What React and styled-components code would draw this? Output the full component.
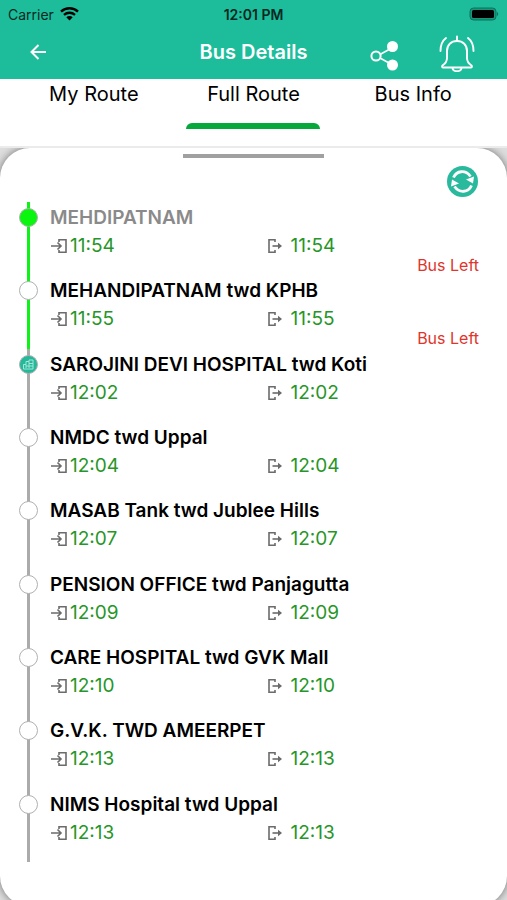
import React, { useState } from "react";
import styled, { createGlobalStyle } from "styled-components";

const GlobalStyle = createGlobalStyle`
  * {
    box-sizing: border-box;
  }

  body {
    margin: 0;
    background: #dedede;
    font-family: Inter, "Liberation Sans", sans-serif;
    color: #000;
  }

  button {
    padding: 0;
    border: none;
    background: none;
    font: inherit;
    color: inherit;
    cursor: pointer;
  }
`;

const Page = styled.div`
  display: flex;
  flex-direction: column;
  min-height: 100vh;
  overflow: hidden;
`;

//=========================== Header ====================================
const Header = styled.header`
  background: #1dbd9c;
`;

const StatusBar = styled.div`
  display: grid;
  grid-template-columns: 1fr auto 1fr;
  align-items: center;
  height: 28px;
  padding: 0 8px;
  font-size: 14px;
  color: #06281f;
`;

const Carrier = styled.div`
  display: flex;
  align-items: center;
  gap: 6px;
`;

const Clock = styled.div`
  font-weight: 600;
`;

const Battery = styled.svg`
  justify-self: end;
`;

const NavBar = styled.div`
  display: grid;
  grid-template-columns: 1fr auto 1fr;
  align-items: center;
  height: 51px;
  padding: 0 30px 2px;
  color: #fff;
`;

const Title = styled.h1`
  margin: 0;
  font-size: 20px;
  font-weight: 600;
  line-height: 46px;
  padding-bottom: 2px;
`;

const NavActions = styled.div`
  display: flex;
  justify-content: flex-end;
  gap: 40px;
  padding-right: 2px;
`;

const IconButton = styled.button`
  display: flex;
  align-items: center;
  justify-self: start;
`;

//=========================== Tabs ====================================
const Tabs = styled.nav`
  position: relative;
  z-index: 1;
  display: grid;
  grid-template-columns: repeat(3, 1fr);
  height: 69px;
  padding: 0 14px;
  background: #fff;
  border-bottom: 2px solid #ebebeb;
`;

const Tab = styled.button`
  display: flex;
  flex-direction: column;
  align-items: center;
  font-size: 20px;
  line-height: 30px;

  &::after {
    content: "";
    width: 134px;
    height: 6px;
    margin-top: 14px;
    border-radius: 6px 6px 0 0;
    background: ${(props) => (props.$active ? "#06a83c" : "transparent")};
  }
`;

//=========================== Sheet ====================================
const Sheet = styled.main`
  flex: 1;
  display: flex;
  flex-direction: column;
  margin-bottom: -6px;
  padding: 6px 0 44px;
  border-radius: 30px;
  background: #fff;
  box-shadow: 0 0 8px rgba(0, 0, 0, 0.5);
`;

const Handle = styled.div`
  align-self: center;
  width: 141px;
  height: 4px;
  background: #a0a0a0;
`;

const RefreshButton = styled(IconButton)`
  align-self: flex-end;
  margin: 8px 29px 5px 0;
`;

const StopList = styled.ol`
  flex: 1;
  display: grid;
  grid-auto-rows: 1fr;
  margin: 0;
  padding: 0 28px 0 18px;
  list-style: none;
`;

const Stop = styled.li`
  display: flex;
  gap: 12px;
`;

const Rail = styled.div`
  display: grid;
  width: 20px;
  justify-items: center;

  > * {
    grid-area: 1 / 1;
  }
`;

const Line = styled.span`
  width: 3px;
  background: ${(props) => (props.$passed ? "#0df31a" : "#ababab")};
`;

const markerColors = {
  start: "#0bf60f",
  bus: "#25b99b",
  stop: "#fff",
};

const Marker = styled.span`
  display: flex;
  align-items: center;
  justify-content: center;
  width: 19px;
  height: 19px;
  margin-top: 6px;
  border: 1px solid #b0b0b0;
  border-radius: 50%;
  background: ${(props) => markerColors[props.$kind]};
`;

const StopBody = styled.div`
  flex: 1;
`;

const StopName = styled.h2`
  margin: 0;
  padding-top: 1px;
  font-size: 19px;
  font-weight: 600;
  line-height: 30px;
  white-space: nowrap;
  color: ${(props) => (props.$muted ? "#8a8a8a" : "#000")};
`;

const Times = styled.div`
  display: grid;
  grid-template-columns: 1fr 1fr;
  column-gap: 4px;
`;

const Time = styled.div`
  display: flex;
  align-items: center;
  gap: ${(props) => props.$gap};
  font-size: 19px;
  line-height: 26px;
  color: #279628;
`;

const Status = styled.div`
  font-size: 16px;
  line-height: 12px;
  text-align: right;
  color: #e0352b;
`;

//=========================== Icons ====================================
const WifiIcon = () => (
  <svg width="19" height="14" viewBox="0 0 19 14" fill="none" stroke="#000">
    <path d="M1 4.6C5.8.2 13.2.2 18 4.600" strokeWidth="2.400" />
    <path d="M4 7.900c3.200-2.900 7.800-2.900 11 0" strokeWidth="2.300" />
    <path d="M6.300 10.300c1.900-1.700 4.500-1.700 6.400 0L9.500 13.600z" fill="#000" stroke="none" />
  </svg>
);

const BatteryIcon = () => (
  <Battery width="30" height="14" viewBox="0 0 30 14">
    <rect x="1" y="1" width="26" height="12" rx="3.500" fill="#16967b" stroke="#0f705c" />
    <rect x="3" y="3" width="22" height="8" rx="1.500" fill="#000" />
    <path d="M28 5c1.600.5 1.600 3.500 0 4z" fill="#0f705c" />
  </Battery>
);

const BackIcon = () => (
  <svg width="18" height="22" viewBox="0 0 18 22" fill="none" stroke="#fff" strokeWidth="2">
    <path d="M16 10H1.500M8.500 3l-7 7 7 7" />
  </svg>
);

const ShareIcon = () => (
  <svg width="29" height="38" viewBox="0 0 29 38" fill="none" stroke="#fff" strokeWidth="2">
    <path d="M10 20.500 19 15.500M10 24l9 5" strokeWidth="1.600" />
    <circle cx="6" cy="22" r="4.600" />
    <circle cx="22.500" cy="12.500" r="5.500" fill="#fff" stroke="none" />
    <circle cx="22.500" cy="31" r="5.500" fill="#fff" stroke="none" />
  </svg>
);

const BellIcon = () => (
  <svg
    width="36"
    height="38"
    viewBox="0 -2 36 38"
    fill="none"
    stroke="#fff"
    strokeWidth="1.900"
    strokeLinecap="round"
    strokeLinejoin="round"
  >
    <path d="M18 .5V5" />
    <path d="M8 15c0-6 4-10 10-10s10 4 10 10v7c0 4 1.500 5.500 4.500 7.500.9.900.4 2-.8 2H4.300c-1.200 0-1.700-1.100-.8-2 3-2 4.500-3.500 4.500-7.500z" />
    <path d="M13.500 32c.5 4.200 8.500 4.200 9 0" />
    <path d="M7 2C3 5 1.500 9.500 1.500 15M29 2C33 5 34.500 9.500 34.500 15" />
  </svg>
);

const RefreshIcon = () => (
  <svg width="31" height="31" viewBox="0 0 31 31">
    <circle cx="15.500" cy="15.500" r="15.500" fill="#29b99c" />
    <g fill="none" stroke="#fff" strokeWidth="2.800">
      <path d="M6.500 11.500C9.500 4.500 18.500 3.500 23.500 10.500" />
      <path d="M24.500 19.500C21.500 26.500 12.500 27.500 7.500 20.500" />
    </g>
    <path d="M19 13.500 27 10.500l-1 7z" fill="#fff" />
    <path d="M12 17.500 4 20.500l1-7z" fill="#fff" />
  </svg>
);

const ArriveIcon = () => (
  <svg width="18" height="16" viewBox="0 0 18 16" fill="none" stroke="#6b6b6b" strokeWidth="1.600">
    <path d="M1 8h10M7.500 4.500 11 8l-3.500 3.500" />
    <path d="M9 4V1.800h7v12.400H9V12" />
  </svg>
);

const DepartIcon = () => (
  <svg width="16" height="16" viewBox="0 0 16 16" fill="none" stroke="#6b6b6b" strokeWidth="1.600">
    <path d="M8 4V1.800H2v12.400h6V12" />
    <path d="M5.500 8H14" />
    <path d="M11 4.800 15 8l-4 3.200z" fill="#6b6b6b" stroke="none" />
  </svg>
);

const BusIcon = () => (
  <svg width="11" height="11" viewBox="0 0 11 11" fill="none" stroke="#a5e5d7">
    <path d="M.5 10V5.500H3V2.500h3V1h4v9zM3 5.500V9M6 2.500V9M3 7h7M6 4.500h4" />
  </svg>
);

//=========================== Screen ====================================
const tabs = ["My Route", "Full Route", "Bus Info"];

const stops = [
  { name: "MEHDIPATNAM", time: "11:54", kind: "start", left: true },
  { name: "MEHANDIPATNAM twd KPHB", time: "11:55", kind: "stop", left: true },
  { name: "SAROJINI DEVI HOSPITAL twd Koti", time: "12:02", kind: "bus" },
  { name: "NMDC twd Uppal", time: "12:04", kind: "stop" },
  { name: "MASAB Tank twd Jublee Hills", time: "12:07", kind: "stop" },
  { name: "PENSION OFFICE twd Panjagutta", time: "12:09", kind: "stop" },
  { name: "CARE HOSPITAL twd GVK Mall", time: "12:10", kind: "stop" },
  { name: "G.V.K. TWD AMEERPET", time: "12:13", kind: "stop" },
  { name: "NIMS Hospital twd Uppal", time: "12:13", kind: "stop" },
];

const App = () => {
  const [activeTab, setActiveTab] = useState("Full Route");

  return (
    <Page>
      <GlobalStyle />
      <Header>
        <StatusBar>
          <Carrier>
            Carrier
            <WifiIcon />
          </Carrier>
          <Clock>12:01 PM</Clock>
          <BatteryIcon />
        </StatusBar>
        <NavBar>
          <IconButton aria-label="Back">
            <BackIcon />
          </IconButton>
          <Title>Bus Details</Title>
          <NavActions>
            <IconButton aria-label="Share">
              <ShareIcon />
            </IconButton>
            <IconButton aria-label="Alerts">
              <BellIcon />
            </IconButton>
          </NavActions>
        </NavBar>
      </Header>
      <Tabs>
        {tabs.map((tab) => (
          <Tab key={tab} $active={tab === activeTab} onClick={() => setActiveTab(tab)}>
            {tab}
          </Tab>
        ))}
      </Tabs>
      <Sheet>
        <Handle />
        <RefreshButton aria-label="Refresh">
          <RefreshIcon />
        </RefreshButton>
        <StopList>
          {stops.map((stop) => (
            <Stop key={stop.name}>
              <Rail>
                <Line $passed={stop.left} />
                <Marker $kind={stop.kind}>{stop.kind === "bus" && <BusIcon />}</Marker>
              </Rail>
              <StopBody>
                <StopName $muted={stop.kind === "start"}>{stop.name}</StopName>
                <Times>
                  <Time $gap="2px">
                    <ArriveIcon />
                    {stop.time}
                  </Time>
                  <Time $gap="8px">
                    <DepartIcon />
                    {stop.time}
                  </Time>
                </Times>
                {stop.left && <Status>Bus Left</Status>}
              </StopBody>
            </Stop>
          ))}
        </StopList>
      </Sheet>
    </Page>
  );
};

export default App;
